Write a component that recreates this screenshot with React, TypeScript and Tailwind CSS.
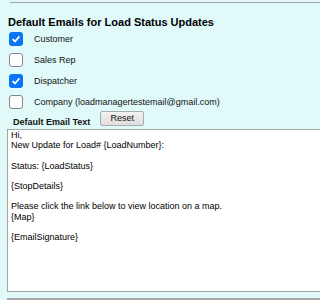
import { useState } from "react";

const defaultText = `Hi,
New Update for Load# {LoadNumber}:

Status: {LoadStatus}

{StopDetails}

Please click the link below to view location on a map.
{Map}

{EmailSignature}`;

function Check({ checked, label, onToggle }: { checked: boolean; label: string; onToggle: () => void }) {
  return (
    <div className="flex h-[21px] items-center">
      <button
        onClick={onToggle}
        className={
          checked
            ? "ml-[9px] flex h-[14px] w-[14px] items-center justify-center rounded-[3px] bg-[#0b75f5]"
            : "ml-[9px] h-[14px] w-[14px] rounded-[3px] border border-[#858585] bg-white"
        }
      >
        {checked && (
          <svg width="10" height="10" viewBox="0 0 10 10">
            <path d="M1.6 5.2 L4 7.5 L8.4 2.4" fill="none" stroke="white" strokeWidth="1.8" />
          </svg>
        )}
      </button>
      <span className="ml-[11px] text-[9px] leading-[10px] text-[#111]">{label}</span>
    </div>
  );
}

export default function App() {
  const [recipients, setRecipients] = useState([
    { label: "Customer", checked: true },
    { label: "Sales Rep", checked: false },
    { label: "Dispatcher", checked: true },
    { label: "Company (loadmanagertestemail@gmail.com)", checked: false },
  ]);
  const [text, setText] = useState(defaultText);

  const toggle = (i: number) =>
    setRecipients((r) => r.map((x, j) => (j === i ? { ...x, checked: !x.checked } : x)));

  return (
    <div className="h-[300px] w-[320px] overflow-hidden bg-[#e0fafa] font-['Liberation_Sans',Arial,sans-serif]">
      <div className="ml-[10px] mt-[2px] h-[1px] bg-[#a3a3a3]" />
      <h2 className="ml-[8px] mt-[13px] h-[12px] text-[11px] font-bold leading-[13px] text-black">
        Default Emails for Load Status Updates
      </h2>

      <div>
        {recipients.map((r, i) => (
          <Check key={r.label} checked={r.checked} label={r.label} onToggle={() => toggle(i)} />
        ))}
      </div>

      <div className="-mt-[1px] flex items-start">
        <span className="ml-[13px] mt-[6px] text-[9px] font-bold leading-[10px] text-[#111]">
          Default Email Text
        </span>
        <button
          onClick={() => setText(defaultText)}
          className="ml-[10px] h-[15px] w-[44px] rounded-[2px] border border-[#acacac] bg-gradient-to-b from-[#f2f2f2] to-[#dedede] text-[9px] leading-[13px] text-[#111]"
        >
          Reset
        </button>
      </div>

      <textarea
        value={text}
        onChange={(e) => setText(e.target.value)}
        className="ml-[7px] mt-[2px] block h-[163px] w-[330px] resize-none border border-[#a5a5a5] bg-white px-[3px] py-0 font-['Liberation_Sans',Arial,sans-serif] text-[9px] leading-[10.2px] text-black outline-none"
      />

      <div className="ml-[7px] mt-[6px] h-[2px] bg-[#a5a5a5]" />
    </div>
  );
}
